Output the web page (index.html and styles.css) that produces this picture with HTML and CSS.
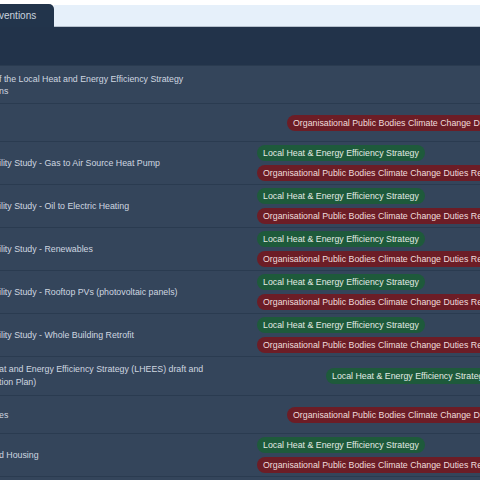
FILE: index.html
```html
<!DOCTYPE html>
<html>
<head>
<meta charset="utf-8">
<link rel="stylesheet" href="styles.css">
</head>
<body>
<div class="tabs">
  <div class="tab">ventions</div>
  <div class="tabfill"></div>
</div>
<div class="table">
  <div class="thead"></div>
  <div class="row">
    <div class="name">f the Local Heat and Energy Efficiency Strategy<br>ns</div>
    <div class="tags"></div>
  </div>
  <div class="row">
    <div class="name"></div>
    <div class="tags one-red"><span class="pill red">Organisational Public Bodies Climate Change Duties Reporting</span></div>
  </div>
  <div class="row stack">
    <div class="name">ility Study - Gas to Air Source Heat Pump</div>
    <div class="tags"><span class="pill green">Local Heat &amp; Energy Efficiency Strategy</span><span class="pill red">Organisational Public Bodies Climate Change Duties Reporting</span></div>
  </div>
  <div class="row stack">
    <div class="name">ility Study - Oil to Electric Heating</div>
    <div class="tags"><span class="pill green">Local Heat &amp; Energy Efficiency Strategy</span><span class="pill red">Organisational Public Bodies Climate Change Duties Reporting</span></div>
  </div>
  <div class="row stack">
    <div class="name">ility Study - Renewables</div>
    <div class="tags"><span class="pill green">Local Heat &amp; Energy Efficiency Strategy</span><span class="pill red">Organisational Public Bodies Climate Change Duties Reporting</span></div>
  </div>
  <div class="row stack">
    <div class="name">ility Study - Rooftop PVs (photovoltaic panels)</div>
    <div class="tags"><span class="pill green">Local Heat &amp; Energy Efficiency Strategy</span><span class="pill red">Organisational Public Bodies Climate Change Duties Reporting</span></div>
  </div>
  <div class="row stack">
    <div class="name">ility Study - Whole Building Retrofit</div>
    <div class="tags"><span class="pill green">Local Heat &amp; Energy Efficiency Strategy</span><span class="pill red">Organisational Public Bodies Climate Change Duties Reporting</span></div>
  </div>
  <div class="row tall">
    <div class="name lines">at and Energy Efficiency Strategy (LHEES) draft and<br>tion Plan)</div>
    <div class="tags one-green"><span class="pill green">Local Heat &amp; Energy Efficiency Strategy</span></div>
  </div>
  <div class="row">
    <div class="name">es</div>
    <div class="tags one-red"><span class="pill red">Organisational Public Bodies Climate Change Duties Reporting</span></div>
  </div>
  <div class="row stack">
    <div class="name">d Housing</div>
    <div class="tags"><span class="pill green">Local Heat &amp; Energy Efficiency Strategy</span><span class="pill red">Organisational Public Bodies Climate Change Duties Reporting</span></div>
  </div>
  <div class="row stack">
    <div class="name">ility Study</div>
    <div class="tags"><span class="pill green">Local Heat &amp; Energy Efficiency Strategy</span><span class="pill red">Organisational Public Bodies Climate Change Duties Reporting</span></div>
  </div>
</div>
</body>
</html>
```

FILE: styles.css
```css
html, body {
  margin: 0;
  padding: 0;
  background: #ffffff;
  overflow: hidden;
  width: 480px;
  height: 480px;
}
body {
  font-family: "Liberation Sans", Arial, sans-serif;
  font-size: 8.8px;
  color: #cfd7e0;
}
.tabs {
  display: flex;
  height: 27px;
  padding-top: 4px;
  box-sizing: border-box;
  background: #ffffff;
}
.tab {
  width: 55px;
  background: #22344b;
  border-radius: 0 5px 0 0;
  color: #c9d3de;
  font-size: 10px;
  line-height: 23px;
  margin-left: -2px;
  padding-left: 1px;
}
.tabfill {
  flex: 1;
  margin-top: 1px;
  background: #e6f0fa;
  border-bottom: 1px solid #b6c1cd;
}
.table {
  width: 480px;
  overflow: hidden;
  background: #34455b;
}
.thead {
  height: 38px;
  background: #22334a;
}
.row {
  display: grid;
  grid-template-columns: 257px 1fr;
  align-items: center;
  height: 38px;
  box-sizing: border-box;
  border-top: 1px solid #2a3b50;
  background: #34455b;
}
.row.stack {
  height: 43px;
}
.row.tall {
  height: 39px;
}
.name {
  white-space: nowrap;
  line-height: 12px;
  margin-left: -1px;
}
.name.lines {
  line-height: 13px;
}
.tags {
  display: flex;
  flex-direction: column;
  align-items: flex-start;
  gap: 4px;
  overflow: hidden;
  min-width: 0;
}
.tags.one-red {
  padding-left: 30px;
}
.tags.one-green {
  padding-left: 69px;
}
.pill {
  display: inline-block;
  white-space: nowrap;
  height: 16px;
  line-height: 16px;
  padding: 0 6px;
  border-radius: 8px;
}
.pill.green {
  background: #1e5a3b;
  color: #e2ebe4;
}
.pill.red {
  background: #6c1d26;
  color: #f0dcdc;
}
```
